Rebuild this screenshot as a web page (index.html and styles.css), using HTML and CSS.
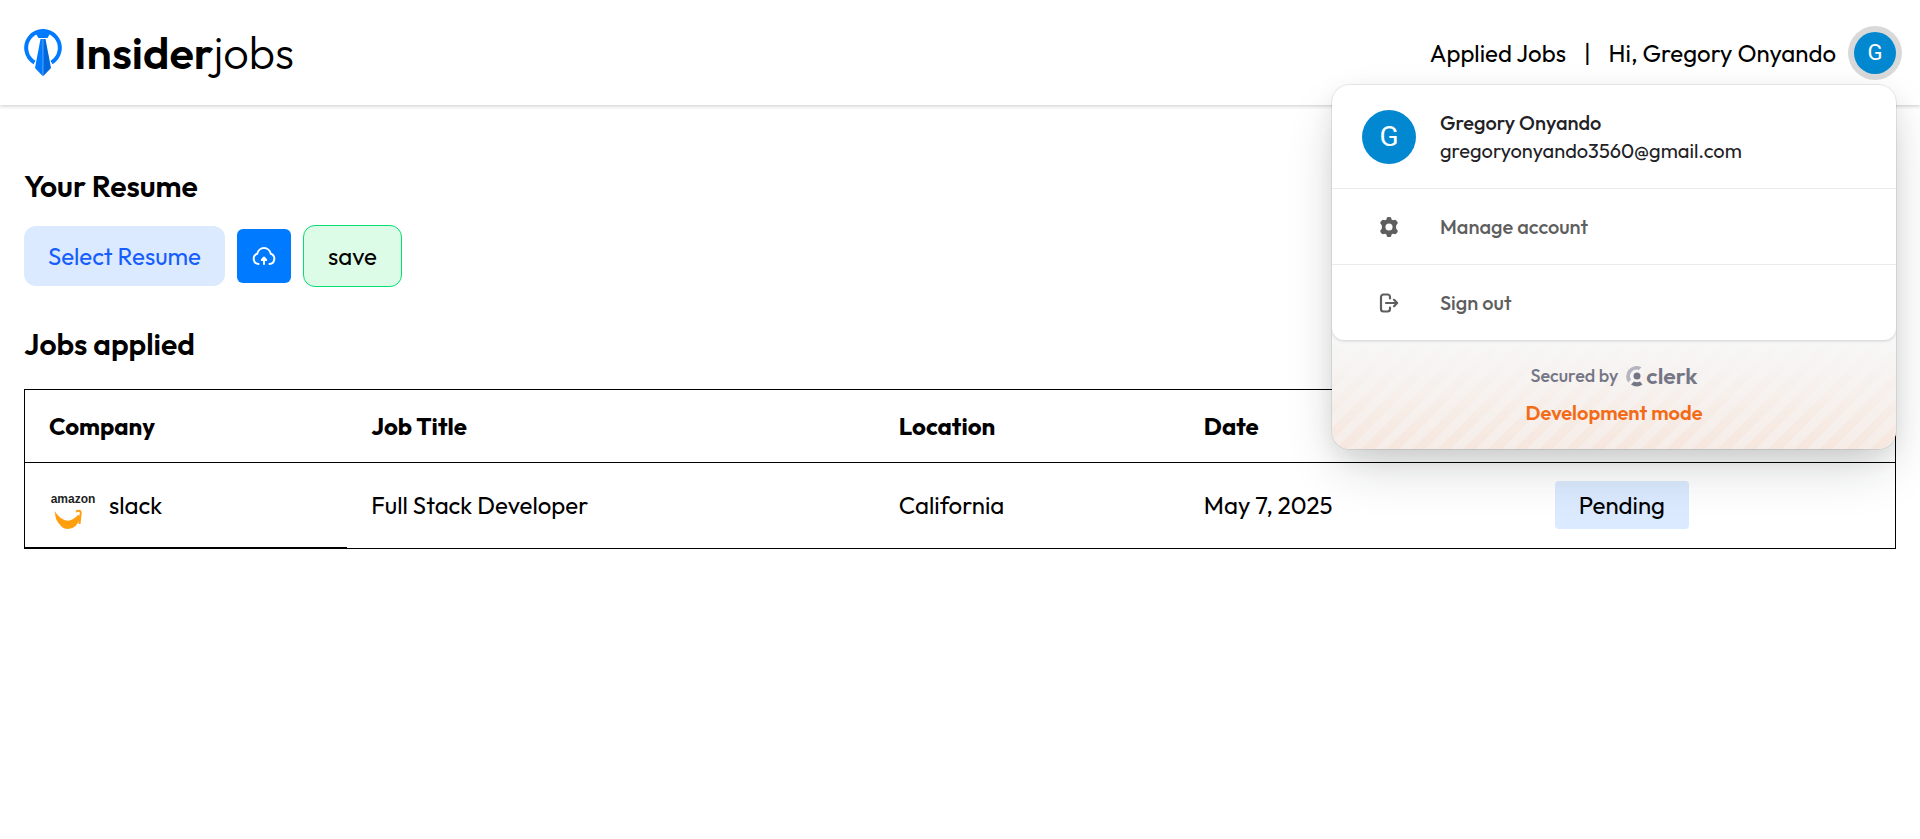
FILE: index.html
```html
<!DOCTYPE html>
<html lang="en">
<head>
<meta charset="utf-8">
<meta name="viewport" content="width=device-width, initial-scale=1">
<title>Insiderjobs</title>
<link rel="stylesheet" href="styles.css">
</head>
<body>
<header class="topbar">
  <a class="brand" href="#">
    <svg class="brand-mark" viewBox="0 0 38 48" aria-hidden="true">
      <path d="M10.5 33.4A16.8 16.8 0 1 1 27.5 33.4" fill="none" stroke="#007aff" stroke-width="4"/>
      <path d="M11 2.5 19 0l8 2.5-1 2-2.5 4.5h-9L12 5z" fill="#007aff"/>
      <path d="M16.5 10h2.3v37.3L11 39z" fill="#007aff"/>
      <path d="M19.2 10h2.3L27 39l-7.8 8.3z" fill="#0067dc"/>
      <path d="M15.2 9.5h7.6" stroke="#fff"/>
    </svg>
    <span class="brand-name"><strong>Insider</strong><span class="brand-light">jobs</span></span>
  </a>
  <nav class="account">
    <a class="nav-link" href="#">Applied Jobs</a>
    <span class="bar">|</span>
    <span class="greeting">Hi, Gregory Onyando</span>
    <button class="avatar avatar-button" type="button" aria-label="Open user menu">G</button>
    <section class="popover" aria-label="User menu">
      <div class="popover-main">
        <div class="profile">
          <span class="avatar avatar-large">G</span>
          <div>
            <div class="profile-name">Gregory Onyando</div>
            <div class="profile-mail">gregoryonyando3560@gmail.com</div>
          </div>
        </div>
        <button class="menu-item" type="button">
          <svg class="menu-icon" viewBox="1 1 18 18" aria-hidden="true">
            <path fill="#5e5e5e" fill-rule="evenodd" d="M8.2 1.2Q10 .8 11.8 1.2L12.3 3.2 13.5 3.9 15.6 3.4Q17.6 4.4 18 6.4L16.4 8.6V11.4L18 13.6Q17.6 15.6 15.6 16.6L13.5 16.1 12.3 16.8 11.8 18.8Q10 19.2 8.2 18.8L7.7 16.8 6.5 16.1 4.4 16.6Q2.4 15.6 2 13.6L3.6 11.4V8.6L2 6.4Q2.4 4.4 4.4 3.4L6.5 3.9 7.7 3.2zM10 6.8a3.2 3.2 0 1 0 0 6.4 3.2 3.2 0 0 0 0-6.4z"/>
          </svg>
          <span>Manage account</span>
        </button>
        <button class="menu-item" type="button">
          <svg class="menu-icon" viewBox="0 0 20 20" fill="none" stroke="#5e5e5e" stroke-width="2.2" stroke-linecap="round" stroke-linejoin="round" aria-hidden="true">
            <path d="M11 5.500V4a2.500 2.500 0 0 0-2.500-2.500H4.500A2.500 2.500 0 0 0 2 4v12a2.500 2.500 0 0 0 2.500 2.500h4A2.500 2.500 0 0 0 11 16v-1.500M7 10h11M15 6.800 18.200 10 15 13.200"/>
          </svg>
          <span>Sign out</span>
        </button>
      </div>
      <div class="popover-foot">
        <div class="secured"><span>Secured by</span>
          <a class="clerk" href="#">
            <svg class="clerk-mark" viewBox="0 0 18 22" aria-hidden="true">
              <path d="M15.500 2.200 12.800 5A6.500 6.500 0 0 0 5 14.500L2.200 17.500A10.400 10.400 0 0 1 15.500 2.200z" fill="#b4b5be"/>
              <circle cx="11" cy="11" r="3.500" fill="#747686"/>
              <path d="M16.500 19.600A10.500 10.500 0 0 1 5 19.600L8 16.500a6.500 6.500 0 0 0 6 0z" fill="#747686"/>
            </svg>
            <span>clerk</span>
          </a>
        </div>
        <div class="dev-mode">Development mode</div>
      </div>
    </section>
  </nav>
</header>

<main class="page">
  <h2 class="title">Your Resume</h2>
  <div class="actions">
    <button class="select-resume" type="button">Select Resume</button>
    <button class="upload" type="button" aria-label="Upload resume">
      <svg class="upload-icon" viewBox="0 0 24 20" fill="none" stroke="#fff" stroke-width="2" stroke-linecap="round" stroke-linejoin="round" aria-hidden="true">
        <path d="M6.500 18A5.300 5.300 0 0 1 5.300 7.700a6.800 6.800 0 0 1 13.400 0A5.300 5.300 0 0 1 17.500 18M12 18v-5"/>
        <path d="M12 11.500 9.800 14h4.400z" fill="#fff"/>
      </svg>
    </button>
    <button class="save" type="button">save</button>
  </div>
  <h2 class="title">Jobs applied</h2>
  <table class="jobs">
    <colgroup>
      <col class="col-company"><col class="col-title"><col class="col-location"><col class="col-date"><col>
    </colgroup>
    <thead>
      <tr><th>Company</th><th>Job Title</th><th>Location</th><th>Date</th><th></th></tr>
    </thead>
    <tbody>
      <tr>
        <td class="company">
          <div class="company-cell">
            <svg class="company-logo" viewBox="0 0 48 48" role="img" aria-label="amazon">
              <text class="logo-word" x="24" y="22" text-anchor="middle">amazon</text>
              <path d="M7 38 5.500 30Q17 47 29 34L32 35Q28 48 19 48 12 48 7 38z" fill="#ff9e0f"/>
              <path d="M27 30.500Q33 28 31.500 34L30.500 43" fill="none" stroke="#ff9e0f" stroke-width="2"/>
            </svg>
            <span>slack</span>
          </div>
        </td>
        <td>Full Stack Developer</td>
        <td>California</td>
        <td>May 7, 2025</td>
        <td><span class="status">Pending</span></td>
      </tr>
    </tbody>
  </table>
</main>
</body>
</html>
```
FILE: styles.css
```css
* { box-sizing: border-box; }
body {
  margin: 0;
  background: #fff;
  color: #000;
  font: 24px/36px Outfit, Lato, sans-serif;
}
button { font: inherit; color: inherit; border: 0; cursor: pointer; }
a { color: inherit; text-decoration: none; }

.topbar {
  display: flex;
  align-items: center;
  justify-content: space-between;
  padding: 24px;
  box-shadow: 0 1px 4px rgba(0, 0, 0, .22);
}
.brand { display: flex; align-items: center; gap: 12px; }
.brand-mark { width: 38px; height: 48px; }
.brand-name { font-size: 45px; line-height: 57px; }
.brand-name strong { font-weight: 600; }
.brand-light { font-weight: 300; }

.account { position: relative; display: flex; align-items: center; }
.bar { margin: 0 18px; }
.greeting { margin-right: 18px; }
.avatar {
  display: flex;
  align-items: center;
  justify-content: center;
  flex: none;
  border-radius: 50%;
  background: #0288d1;
  color: #fff;
  font-family: Roboto, sans-serif;
}
.avatar-button {
  width: 42px;
  height: 42px;
  padding: 0;
  font-size: 22px;
  box-shadow: 0 0 0 6px #d9d9d9;
}
.avatar-large { width: 54px; height: 54px; font-size: 28px; }

.popover {
  position: absolute;
  z-index: 2;
  top: 53px;
  right: 0;
  width: 564px;
  overflow: hidden;
  border-radius: 18px;
  background: #f7f7f7;
  color: #212126;
  font-size: 20px;
  line-height: 28px;
  box-shadow: 0 8px 23px rgba(0, 0, 0, .08), 0 23px 53px -8px rgba(25, 28, 33, .2), 0 0 0 1px rgba(0, 0, 0, .08);
}
.popover-main {
  position: relative;
  border-radius: 12px;
  background: #fff;
  box-shadow: 0 1px 3px rgba(0, 0, 0, .16);
}
.profile { display: flex; align-items: center; gap: 24px; padding: 24px 30px 23px; }
.profile-name { font-weight: 500; }
.menu-item {
  display: flex;
  align-items: center;
  gap: 24px;
  width: 100%;
  padding: 24px 30px 23px;
  border-top: 1px solid #ebebeb;
  background: none;
  color: #5e5e5e;
  font-weight: 500;
  text-align: left;
}
.menu-icon { width: 20px; height: 20px; margin: 0 17px; }
.popover-foot {
  display: flex;
  flex-direction: column;
  align-items: center;
  gap: 9px;
  padding: 22px 24px;
  background:
    linear-gradient(#f7f7f7, rgba(247, 247, 247, 0)),
    repeating-linear-gradient(-45deg, #f6ede8 0 9px, #f6e7de 9px 18px);
}
.secured { display: flex; align-items: center; gap: 8px; color: #747686; font-size: 18px; font-weight: 500; }
.clerk { display: flex; align-items: center; gap: 2px; font-size: 23px; font-weight: 600; }
.clerk-mark { width: 18px; height: 22px; }
.dev-mode { color: #f36b16; font-weight: 600; }

.page { padding: 60px 24px; }
.title { margin: 0; font-size: 30px; line-height: 42px; font-weight: 600; }
.actions { display: flex; align-items: center; gap: 12px; margin: 18px 0 36px; }
.select-resume {
  padding: 12px 24px;
  border-radius: 12px;
  background: #dbeafe;
  color: #155dfc;
}
.upload {
  display: flex;
  align-items: center;
  justify-content: center;
  width: 54px;
  height: 54px;
  padding: 0;
  border-radius: 6px;
  background: #007aff;
}
.upload-icon { width: 24px; height: 20px; }
.save {
  padding: 12px 24px;
  border: 1px solid #05df72;
  border-radius: 12px;
  background: #dcfce7;
}

.jobs {
  width: 100%;
  margin-top: 24px;
  border: 1px solid #000;
  border-collapse: collapse;
  table-layout: fixed;
}
.col-company { width: 17.25%; }
.col-title { width: 28.2%; }
.col-location { width: 16.3%; }
.col-date { width: 18.75%; }
.jobs th, .jobs td { padding: 18px 24px; text-align: left; }
.jobs thead { border-bottom: 1px solid #000; }
.jobs .company { border-bottom: 2px solid #000; }
.company-cell { display: flex; align-items: center; gap: 12px; }
.company-logo { width: 48px; height: 48px; }
.logo-word { fill: #221f1f; font: bold 12px "Liberation Sans", sans-serif; }
.status {
  display: inline-block;
  padding: 6px 24px;
  border-radius: 4px;
  background: #dbeafe;
  vertical-align: middle;
}
```
